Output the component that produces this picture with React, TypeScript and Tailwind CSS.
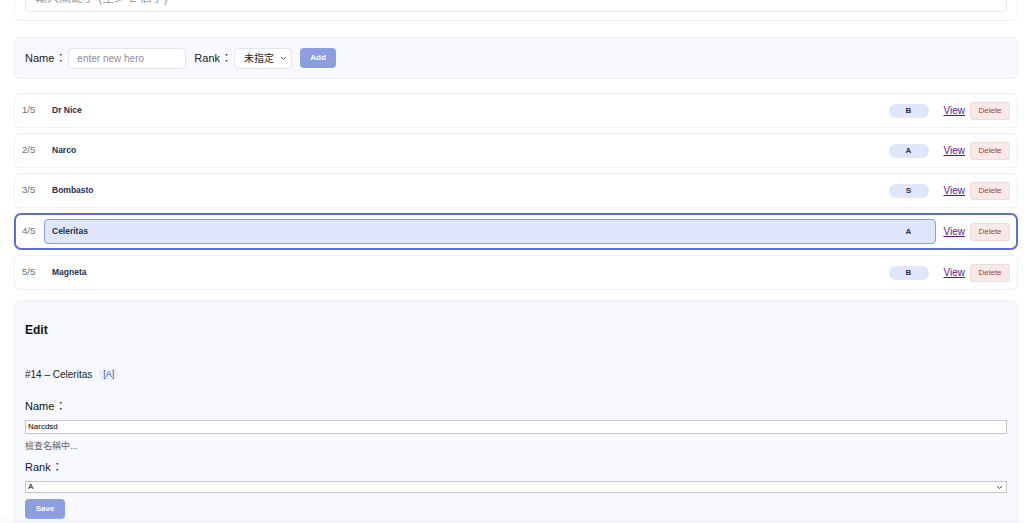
import React from "react";

const heroes = [
  { name: "Dr Nice", rank: "B" },
  { name: "Narco", rank: "A" },
  { name: "Bombasto", rank: "S" },
  { name: "Celeritas", rank: "A", selected: true },
  { name: "Magneta", rank: "B" },
];

const font = { fontFamily: '"Liberation Sans", Arial, "Noto Sans CJK TC", sans-serif' };

function Label({ text }: { text: string }) {
  return (
    <span>
      {text}
      <span className="pl-[1px]">：</span>
    </span>
  );
}

export default function App() {
  return (
    <div lang="zh-Hant-TW" className="min-h-[523px] bg-white text-[#1f2937] overflow-hidden relative" style={font}>
      <div className="ml-[14px] w-[1004px] flex flex-col">
        {/* search card (scrolled partly off) */}
        <div className="mt-[-30px] rounded-[6px] border border-[#f0f1f5] bg-white px-[10px] pt-[13px] pb-[8px]">
          <div className="h-[28px] rounded-[4px] border border-[#e6e8ee] bg-white flex items-center px-[9px] text-[12px] text-[#9a9a9a]">
            輸入關鍵字 (至少 2 個字)
          </div>
        </div>

        {/* add form */}
        <div className="mt-[16px] h-[42px] rounded-[6px] border border-[#edf0f7] bg-[#f7f9fe] flex items-center px-[10px] text-[11px] text-[#222]">
          <Label text="Name" />
          <div className="ml-[2px] w-[118px] h-[21px] rounded-[4px] border border-[#e3e6ee] bg-white flex items-center pl-[8px] text-[10px] text-[#8e8e8e]">
            enter new hero
          </div>
          <span className="ml-[8px]"><Label text="Rank" /></span>
          <div className="ml-[2px] w-[58px] h-[21px] rounded-[4px] border border-[#e3e6ee] bg-white flex items-center pl-[9px] pr-[4px] text-[10px] text-[#222]">
            <span className="flex-1">未指定</span>
            <svg width="7" height="5" viewBox="0 0 7 5"><path d="M1 1l2.5 2.5L6 1" fill="none" stroke="#555" strokeWidth="1" /></svg>
          </div>
          <div className="ml-[8px] w-[36px] h-[20px] rounded-[4px] bg-[#8b9ee0] flex items-center justify-center text-[8px] font-bold text-white">
            Add
          </div>
        </div>

        {/* list */}
        <div className="mt-[14px] flex flex-col gap-[5px]">
          {heroes.map((h, i) => (
            <div
              key={h.name}
              className={
                h.selected
                  ? "h-[37px] rounded-[7px] border-2 border-[#5a6fd8] bg-white flex items-center pl-[6px] pr-[6px]"
                  : "h-[35px] rounded-[6px] border border-[#eff0f4] bg-white flex items-center pl-[7px] pr-[7px]"
              }
            >
              <span className="w-[22px] text-[9.5px] text-[#6b7280]">{i + 1}/5</span>
              <div
                className={
                  h.selected
                    ? "flex-1 h-[25px] rounded-[4px] border border-[#8e9ce2] bg-[#dfe6fb] flex items-center pl-[7px] pr-[6px]"
                    : "flex-1 h-[25px] rounded-[4px] border border-transparent flex items-center pl-[7px] pr-[6px]"
                }
              >
                <span className="flex-1 text-[8.5px] font-bold text-[#25304f]">{h.name}</span>
                <span
                  className={
                    h.selected
                      ? "w-[40px] h-[14px] rounded-full bg-[#dfe6fb] flex items-center justify-center text-[8px] font-bold text-[#25304f]"
                      : "w-[40px] h-[14px] rounded-full bg-[#e0e7fb] flex items-center justify-center text-[8px] font-bold text-[#25304f]"
                  }
                >
                  {h.rank}
                </span>
              </div>
              <a className="ml-[8px] text-[10px] text-[#551a8b] underline cursor-pointer">View</a>
              <div className="ml-[5px] w-[40px] h-[18px] rounded-[3px] border border-[#f1d9d5] bg-[#f7e9e6] flex items-center justify-center text-[8px] text-[#a1403c]">
                Delete
              </div>
            </div>
          ))}
        </div>

        {/* edit card */}
        <div className="mt-[10px] h-[240px] rounded-[6px] border border-[#eff0f5] bg-[#f8f9fe] px-[10px] pt-[21px] flex flex-col">
          <div className="h-[16px] leading-[16px] text-[12px] font-bold text-[#111]">Edit</div>
          <div className="mt-[28px] h-[16px] flex items-center text-[10px] text-[#222]">
            <span>#14 – Celeritas</span>
            <span className="ml-[7px] px-[4px] h-[11px] leading-[11px] rounded-[2px] bg-[#edf1fb] text-[9px] text-[#3d4f9e]">[A]</span>
          </div>
          <div className="mt-[16px] h-[16px] leading-[16px] text-[11px] text-[#111]"><Label text="Name" /></div>
          <div className="mt-[6px] h-[14px] border border-[#c6c6c6] bg-white flex items-center pl-[2px] text-[8px] text-black">
            Narcdsd
          </div>
          <div className="mt-[5px] h-[14px] leading-[14px] text-[9px] text-[#666]">檢查名稱中...</div>
          <div className="mt-[6px] h-[16px] leading-[16px] text-[11px] text-[#111]"><Label text="Rank" /></div>
          <div className="mt-[6px] h-[12px] border border-[#c6c6c6] bg-white flex items-center pl-[2px] pr-[3px] text-[8px] text-black">
            <span className="flex-1">A</span>
            <svg width="7" height="5" viewBox="0 0 7 5"><path d="M1 1l2.5 2.5L6 1" fill="none" stroke="#444" strokeWidth="1" /></svg>
          </div>
          <div className="mt-[6px] w-[40px] h-[20px] rounded-[4px] bg-[#8b9ee0] flex items-center justify-center text-[8px] font-bold text-white">
            Save
          </div>
        </div>
      </div>
      <div className="pointer-events-none absolute left-0 right-0 bottom-0 h-[24px] bg-gradient-to-b from-transparent to-[#e4e5ea]/80" />
    </div>
  );
}
